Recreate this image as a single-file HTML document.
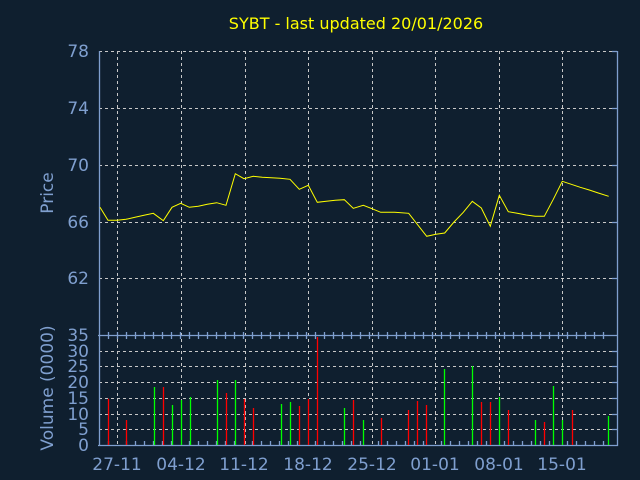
<!DOCTYPE html>
<html><head><style>
html,body{margin:0;padding:0;background:#0f1f2f;}
svg{display:block}
</style></head><body>
<svg width="640" height="480" xmlns="http://www.w3.org/2000/svg" font-family="'DejaVu Sans','Liberation Sans',sans-serif">
<rect width="640" height="480" fill="#0f1f2f"/>
<text x="356" y="29" fill="#ffff00" font-size="16" text-anchor="middle">SYBT - last updated 20/01/2026</text>
<g stroke="#c8c8c8" stroke-width="1" stroke-dasharray="3,3" fill="none">
<path d="M99 51.5H617M99 108.5H617M99 165.5H617M99 222.5H617M99 278.5H617"/>
<path d="M99 351.5H617M99 366.5H617M99 382.5H617M99 398.5H617M99 414.5H617M99 429.5H617"/>
<path d="M117.5 51V445M181.5 51V445M245.5 51V445M308.5 51V445M372.5 51V445M435.5 51V445M499.5 51V445M562.5 51V445"/>
</g>
<g stroke="#7f9fcf" stroke-width="1.3" fill="none">
<path d="M99.5 51V446M617.5 51V446M98 335.5H618M98 445.5H618"/>
<path d="M617 51.5h-5M617 108.5h-5M617 165.5h-5M617 222.5h-5M617 278.5h-5M617 351.5h-5M617 366.5h-5M617 382.5h-5M617 398.5h-5M617 414.5h-5M617 429.5h-5"/>
<path d="M108.5 332v7M117.5 332v7M126.5 332v7M135.5 332v7M144.5 332v7M153.5 332v7M162.5 332v7M171.5 332v7M180.5 332v7M189.5 332v7M198.5 332v7M207.5 332v7M216.5 332v7M225.5 332v7M234.5 332v7M243.5 332v7M252.5 332v7M261.5 332v7M270.5 332v7M279.5 332v7M288.5 332v7M297.5 332v7M306.5 332v7M315.5 332v7M324.5 332v7M333.5 332v7M342.5 332v7M351.5 332v7M360.5 332v7M369.5 332v7M378.5 332v7M387.5 332v7M396.5 332v7M405.5 332v7M414.5 332v7M423.5 332v7M432.5 332v7M441.5 332v7M450.5 332v7M459.5 332v7M468.5 332v7M477.5 332v7M486.5 332v7M495.5 332v7M504.5 332v7M513.5 332v7M522.5 332v7M531.5 332v7M540.5 332v7M549.5 332v7M558.5 332v7M567.5 332v7M576.5 332v7M585.5 332v7M594.5 332v7M603.5 332v7"/>
<path d="M108.5 445v-4M126.5 445v-4M135.5 445v-4M144.5 445v-4M153.5 445v-4M162.5 445v-4M171.5 445v-4M189.5 445v-4M198.5 445v-4M207.5 445v-4M216.5 445v-4M225.5 445v-4M234.5 445v-4M252.5 445v-4M261.5 445v-4M270.5 445v-4M279.5 445v-4M288.5 445v-4M297.5 445v-4M315.5 445v-4M324.5 445v-4M333.5 445v-4M342.5 445v-4M351.5 445v-4M360.5 445v-4M378.5 445v-4M387.5 445v-4M396.5 445v-4M405.5 445v-4M414.5 445v-4M423.5 445v-4M441.5 445v-4M450.5 445v-4M459.5 445v-4M468.5 445v-4M477.5 445v-4M486.5 445v-4M504.5 445v-4M513.5 445v-4M522.5 445v-4M531.5 445v-4M540.5 445v-4M549.5 445v-4M567.5 445v-4M576.5 445v-4M585.5 445v-4M594.5 445v-4M603.5 445v-4"/>
</g>
<polyline fill="none" stroke="#ffff00" stroke-width="1" points="100,207.3 108,220.3 117,220.3 126,219.3 135,217.3 144,215.3 153.3,213.3 163.3,220.7 172,207.3 180.7,203.3 189.3,207.3 198.3,206.3 207.3,204.3 216.7,202.7 226,205.3 235.3,173.7 244,178.7 253.3,176.3 262.3,177.3 271.3,177.7 280,178.3 290,179.3 299.3,189.3 308.3,185.3 317.3,202.3 326.3,201.3 335.3,200.3 344.3,199.7 353.3,208.3 363.3,205.3 372,208.7 380.7,212.3 394.7,212.3 408.7,213.3 426.7,236.3 436,234.3 444.7,233 454,222 463.3,212.3 472.3,201.3 481.3,208 490.3,226.3 499.3,195.3 508.3,211.7 517.3,213.3 526.3,215 535.3,216.3 544.3,216.3 553.3,199.3 562.3,181.3 571.3,184.3 580.3,187.3 589.3,190 598.3,193 608.7,196.3"/>
<g stroke-width="1.3">
<path stroke="#ff0000" d="M108.5 445V398.7M126.5 445V420M163.5 445V387M226.5 445V393M244.5 445V399M253.5 445V408M299.5 445V406M308.5 445V399M317.5 445V337M353.5 445V400M381.5 445V418M408.5 445V410M417.5 445V401M426.5 445V405M481.5 445V402M490.5 445V402M508.5 445V410M544.5 445V422M572.5 445V410"/>
<path stroke="#00ff00" d="M154.5 445V387M172.5 445V405M181.5 445V400M190.5 445V397M217.5 445V380M235.5 445V380M281.5 445V404M290.5 445V402M344.5 445V408M363.5 445V420M444.5 445V369M472.5 445V366M499.5 445V397M535.5 445V420M553.5 445V386M562.5 445V420M608.5 445V416"/>
</g>
<g fill="#7f9fcf" font-size="17" text-anchor="end">
<text x="89" y="57">78</text><text x="89" y="114">74</text><text x="89" y="171">70</text><text x="89" y="228">66</text><text x="89" y="284">62</text>
<text x="89" y="341">35</text><text x="89" y="357">30</text><text x="89" y="372">25</text><text x="89" y="388">20</text><text x="89" y="404">15</text><text x="89" y="420">10</text><text x="89" y="435">5</text><text x="89" y="451">0</text>
</g>
<g fill="#7f9fcf" font-size="17" text-anchor="middle">
<text x="117" y="470">27-11</text><text x="181" y="470">04-12</text><text x="244" y="470">11-12</text><text x="308" y="470">18-12</text><text x="372" y="470">25-12</text><text x="435" y="470">01-01</text><text x="499" y="470">08-01</text><text x="562" y="470">15-01</text>
<text transform="translate(53,193) rotate(-90)">Price</text>
<text transform="translate(53,388) rotate(-90)">Volume (0000)</text>
</g>
</svg>
</body></html>
